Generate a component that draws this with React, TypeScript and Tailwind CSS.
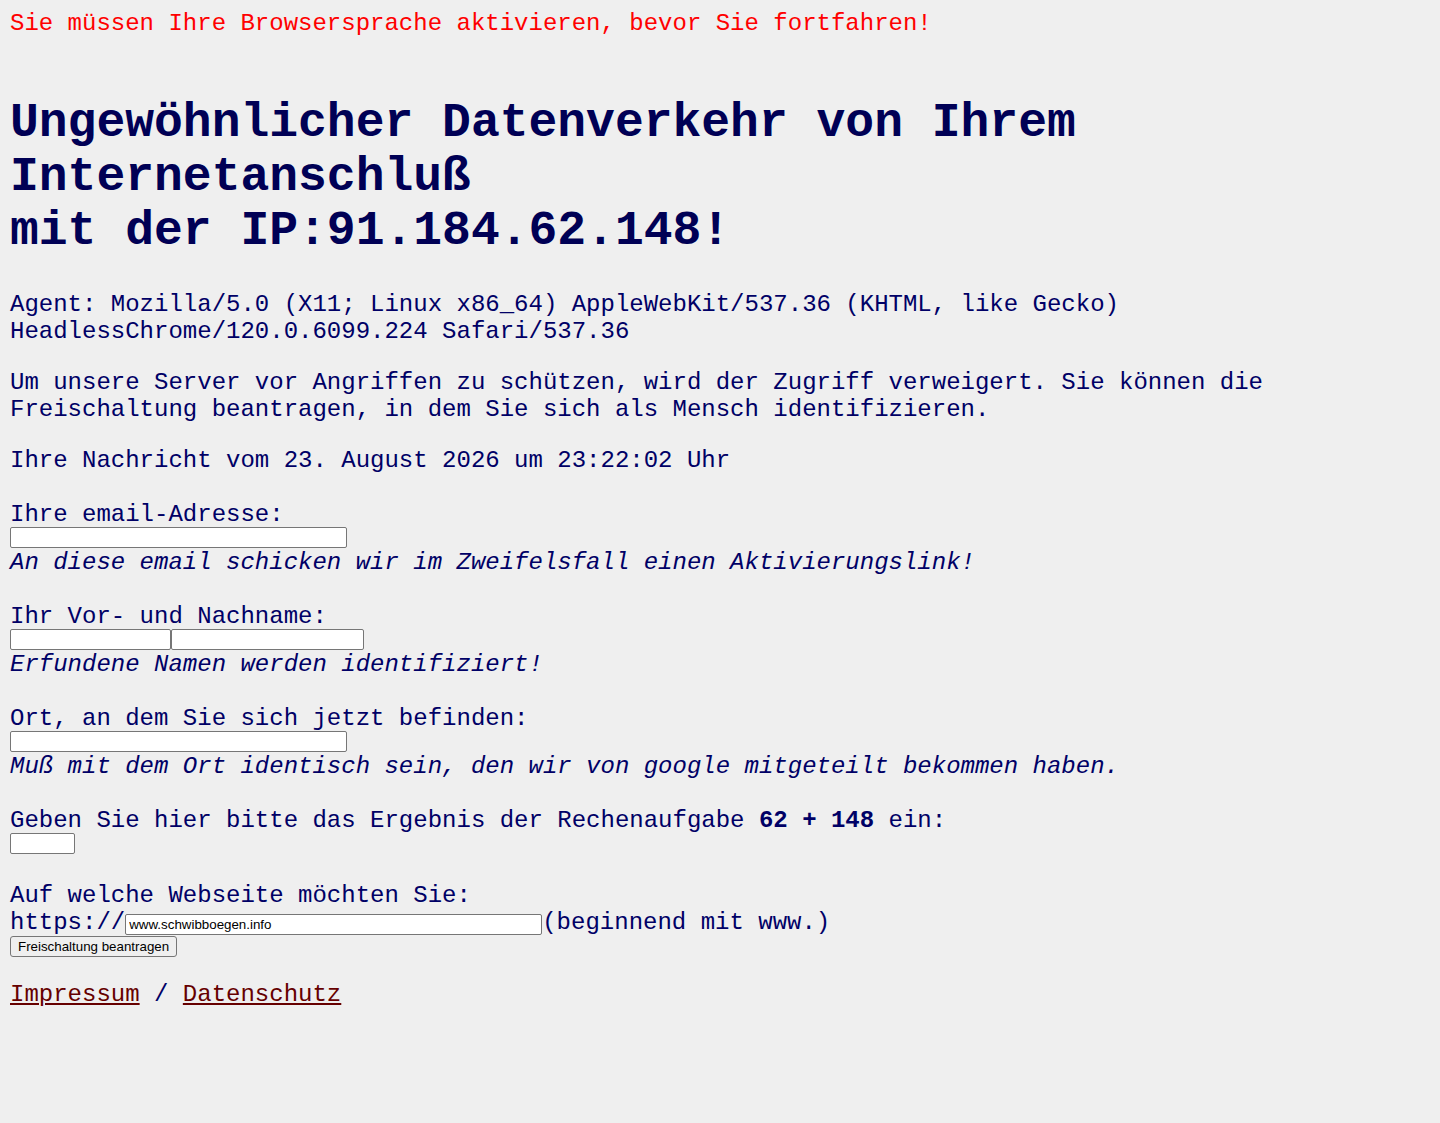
import React from "react";

const inputCls =
  "block h-[21px] border border-[#767676] rounded-[2px] bg-white px-[3px] text-[13.33px] leading-[15px] text-black outline-none [font-family:'Liberation_Sans',Arial,sans-serif]";

export default function App() {
  return (
    <div className="min-h-[1123px] bg-[#efefef] px-[10px] pt-[10px] text-[24px] leading-[27px] text-[#000066] [font-family:'Liberation_Mono','Courier_New',monospace]">
      <p className="text-[#ff0000] h-[27px]">
        Sie müssen Ihre Browsersprache aktivieren, bevor Sie fortfahren!
      </p>
      <h1 className="mt-[59px] mb-[33px] text-[48px] leading-[54px] font-bold text-[#000055]">
        Ungewöhnlicher Datenverkehr von Ihrem
        <br />
        Internetanschluß
        <br />
        mit der IP:91.184.62.148!
      </h1>
      <p>
        Agent: Mozilla/5.0 (X11; Linux x86_64) AppleWebKit/537.36 (KHTML, like Gecko)
        <br />
        HeadlessChrome/120.0.6099.224 Safari/537.36
      </p>
      <p className="mt-[24px]">
        Um unsere Server vor Angriffen zu schützen, wird der Zugriff verweigert. Sie können die
        <br />
        Freischaltung beantragen, in dem Sie sich als Mensch identifizieren.
      </p>
      <p className="mt-[24px]">Ihre Nachricht vom 23. August 2026 um 23:22:02 Uhr</p>

      <form className="mt-[27px]" onSubmit={(e) => e.preventDefault()}>
        <div className="h-[27px]">Ihre email-Adresse:</div>
        <input type="text" className={`${inputCls} -mt-[1px] mb-[1px] w-[337px]`} />
        <div className="h-[27px] italic">
          An diese email schicken wir im Zweifelsfall einen Aktivierungslink!
        </div>
        <div className="h-[27px]" />

        <div className="h-[27px]">Ihr Vor- und Nachname:</div>
        <div className="-mt-[1px] mb-[1px] flex">
          <input type="text" className={`${inputCls} w-[161px]`} />
          <input type="text" className={`${inputCls} w-[193px]`} />
        </div>
        <div className="h-[27px] italic">Erfundene Namen werden identifiziert!</div>
        <div className="h-[27px]" />

        <div className="h-[27px]">Ort, an dem Sie sich jetzt befinden:</div>
        <input type="text" className={`${inputCls} -mt-[1px] mb-[1px] w-[337px]`} />
        <div className="h-[27px] italic">
          Muß mit dem Ort identisch sein, den wir von google mitgeteilt bekommen haben.
        </div>
        <div className="h-[27px]" />

        <div className="h-[27px]">
          Geben Sie hier bitte das Ergebnis der Rechenaufgabe <b>62 + 148</b> ein:
        </div>
        <input type="text" className={`${inputCls} -mt-[1px] mb-[1px] w-[65px]`} />
        <div className="h-[27px]" />

        <div className="h-[27px]">Auf welche Webseite möchten Sie:</div>
        <div className="flex h-[27px] items-end">
          <span className="leading-[27px]">https://</span>
          <input
            type="text"
            defaultValue="www.schwibboegen.info"
            className={`${inputCls} mb-[1px] w-[417px]`}
          />
          <span className="leading-[27px]">(beginnend mit www.)</span>
        </div>
        <button
          type="submit"
          className="block h-[21px] rounded-[3px] border border-[#767676] bg-[#efefef] px-[7px] text-[13.33px] leading-[15px] text-black [font-family:'Liberation_Sans',Arial,sans-serif]"
        >
          Freischaltung beantragen
        </button>
      </form>

      <p className="mt-[24px]">
        <a href="#" className="text-[#660000] underline">
          Impressum
        </a>{" "}
        /{" "}
        <a href="#" className="text-[#660000] underline">
          Datenschutz
        </a>
      </p>
    </div>
  );
}
